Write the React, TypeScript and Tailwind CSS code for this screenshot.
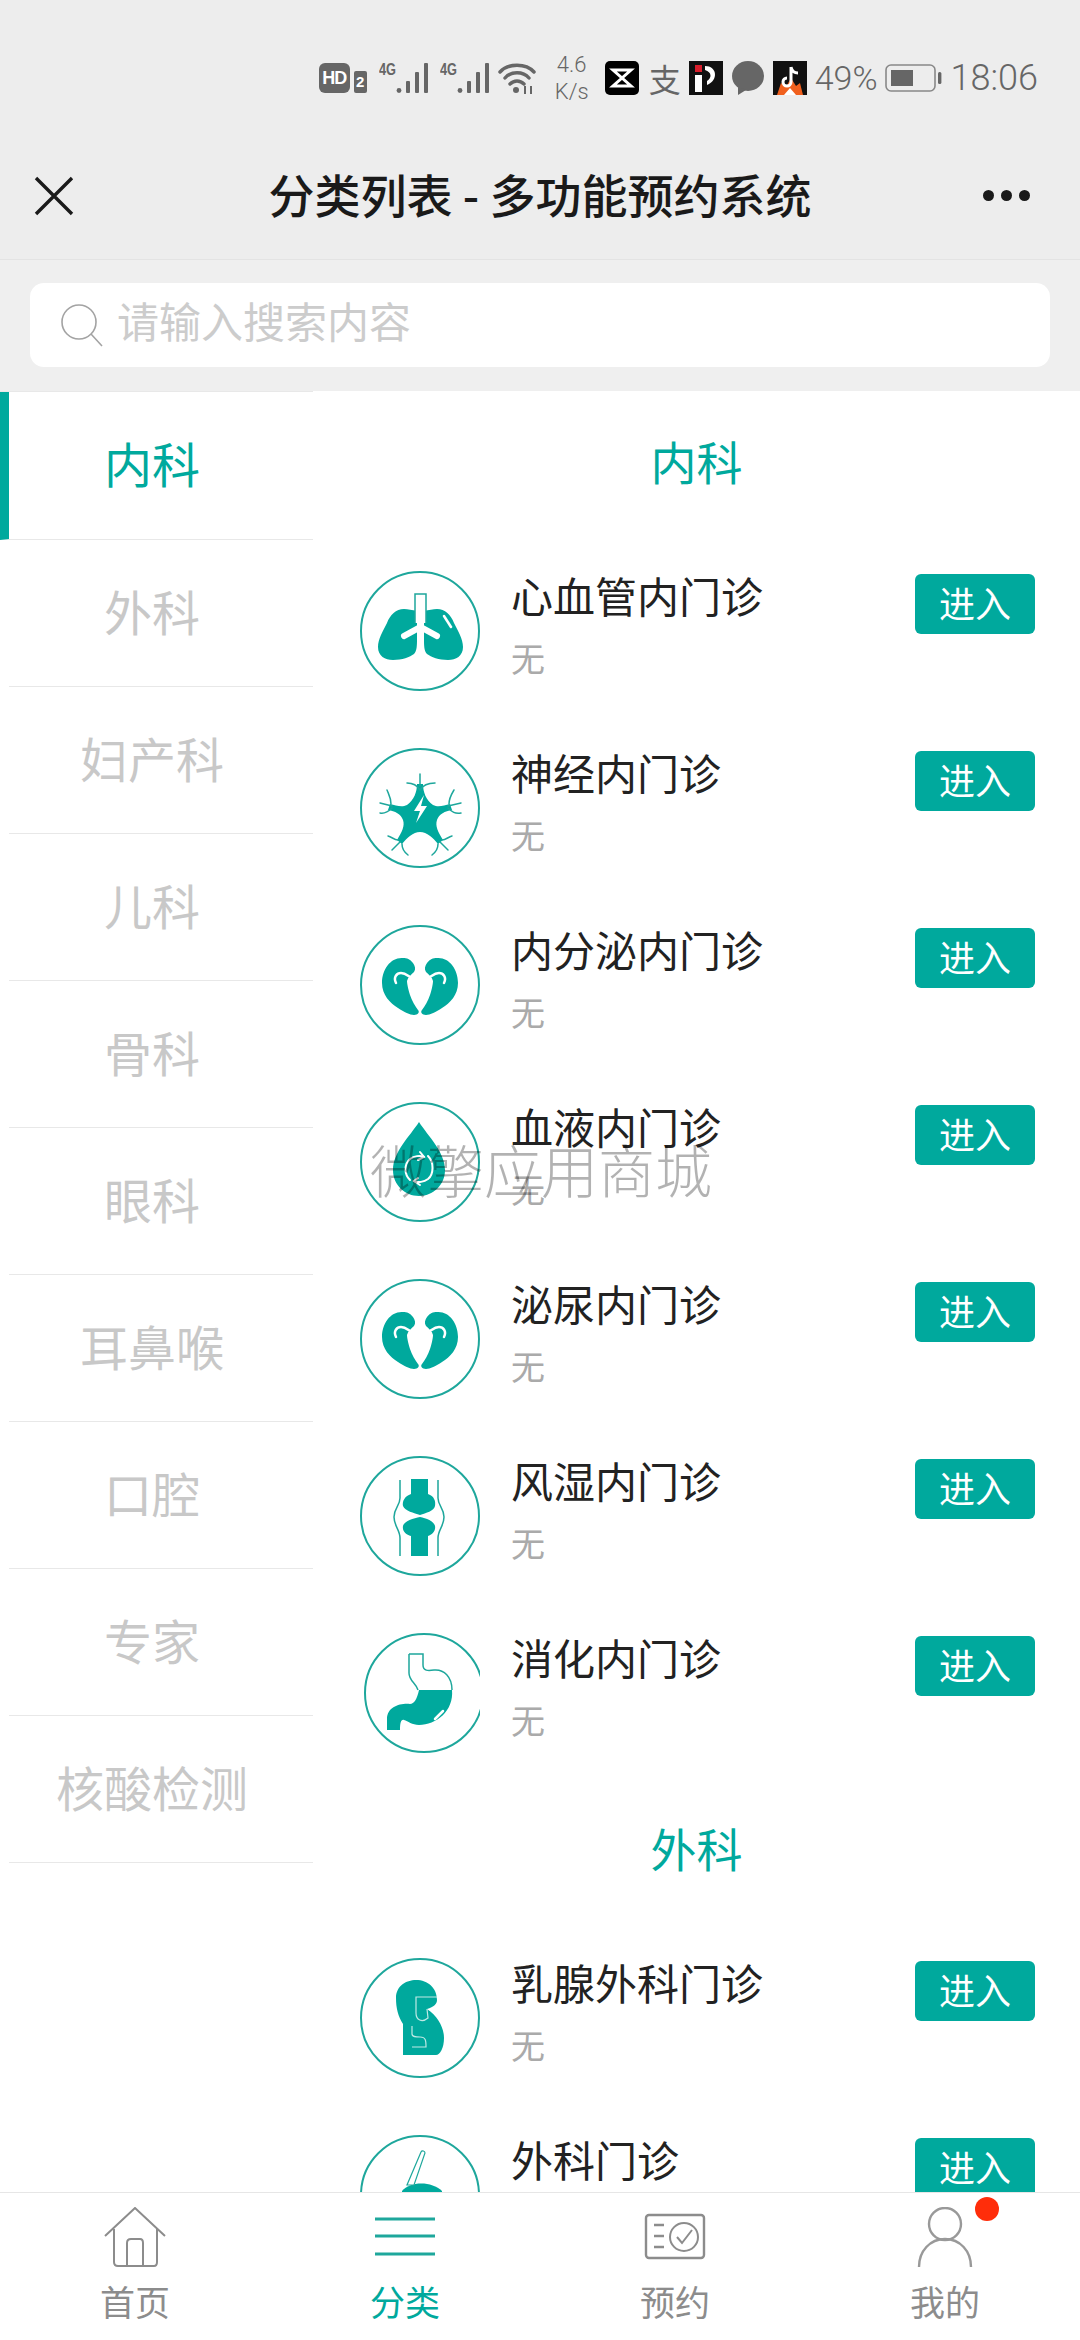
import React from "react";

const TEAL = "#00a99d";
const LINE = "#1ea79c";

function Ring({ cx = 60, children }: { cx?: number; children: React.ReactNode }) {
  return (
    <svg width="120" height="120" viewBox="0 0 120 120" className="shrink-0 overflow-hidden">
      <circle cx={cx} cy="60" r="59" fill="none" stroke={LINE} strokeWidth="2" />
      {children}
    </svg>
  );
}

function Lungs() {
  const lung = "M44 38 C36 38 30 44 27 52 C23 60 18 68 18 76 C18 85 25 89 33 89 C42 89 50 86 54 83 C57 80 57 74 57 68 L57 40 C52 39 48 38 44 38Z";
  return (
    <Ring>
      <path d={lung} fill={TEAL} />
      <path d={lung} fill={TEAL} transform="translate(121 0) scale(-1 1)" />
      <path d="M55 52 V23 H66 V52" fill="#fff" stroke={LINE} strokeWidth="1.5" />
      <path d="M60.5 40 V57 M60.5 56 L44 65 M60.5 56 L77 65" fill="none" stroke="#fff" strokeWidth="6" strokeLinecap="round" />
      <path d="M84 45 L91 56" stroke="#fff" strokeWidth="2.5" strokeLinecap="round" />
    </Ring>
  );
}

function Neuron() {
  return (
    <Ring>
      <path d="M57 36 H63 C63 44 66 52 73 57 C79 60 84 57 90 56 L92 62 C85 63 79 66 77 72 C75 78 78 84 83 92 L78 96 C73 90 67 84 60 84 C53 84 47 90 42 96 L37 92 C42 84 45 78 43 72 C41 66 35 63 28 62 L30 56 C36 57 41 60 47 57 C54 52 57 44 57 36Z" fill={TEAL} />
      <path d="M64 47 L54 63 H60 L56 75 L67 58 H61 Z" fill="#fff" />
      <g fill="none" stroke={LINE} strokeWidth="1.5" strokeLinecap="round">
        <path d="M60 38 V26 M60 42 C57 37 53 35 47 35 M60 42 C63 37 67 35 75 35" />
        <path d="M32 58 L20 55 M32 60 C28 64 25 66 20 65 M31 56 C31 50 29 47 27 42" />
        <path d="M88 58 L101 55 M88 60 C92 64 95 66 101 65 M89 56 C89 50 91 47 94 42" />
        <path d="M40 94 L32 102 M38 92 C34 92 32 89 28 88 M42 96 C42 100 44 104 48 107" />
        <path d="M80 94 L88 102 M82 92 C86 92 88 89 92 88 M78 96 C78 100 76 104 72 107" />
      </g>
    </Ring>
  );
}

function Kidney() {
  const k = "M43 33 C31 32 22 44 22 58 C22 70 30 78 38 83 C44 87 50 90 54 90 C58 90 60 87 58 85 C55 81 52 76 50 70 C48 64 47 58 47 56 C48 52 51 50 54 47 C56 44 55 41 53 38 C50 34 47 33 43 33Z";
  const c = "M36 58 C33 52 37 48 41 48 C45 48 47 50 50 52";
  return (
    <Ring>
      <path d={k} fill={TEAL} />
      <path d={k} fill={TEAL} transform="translate(120 0) scale(-1 1)" />
      <path d={c} fill="none" stroke="#fff" strokeWidth="2.5" strokeLinecap="round" />
      <path d={c} fill="none" stroke="#fff" strokeWidth="2.5" strokeLinecap="round" transform="translate(120 0) scale(-1 1)" />
    </Ring>
  );
}

function Drop() {
  return (
    <Ring>
      <path d="M59 20 C50 34 33 50 33 68 C33 83 45 94 59 94 C73 94 85 83 85 68 C85 50 68 34 59 20Z" fill={TEAL} />
      <g fill="none" stroke="#fff" strokeWidth="2" strokeLinecap="round">
        <path d="M50 78 C44 72 44 62 50 57 C54 54 60 53 64 55" />
        <path d="M68 54 C74 60 74 72 68 77 C64 80 58 81 54 79" />
        <path d="M60 50 L64 55 L58 58 M58 76 L54 79 L60 83" />
      </g>
    </Ring>
  );
}

function Joint() {
  return (
    <Ring>
      <path d="M51 23 H68 V38 C74 40 76 45 75 50 C74 55 66 57 60 59 C54 57 45 55 43 50 C42 45 45 40 51 38Z" fill={TEAL} />
      <path d="M43 70 C44 65 54 62 60 61 C66 62 74 65 75 70 C76 75 72 79 68 80 V100 H51 V80 C46 79 42 75 43 70Z" fill={TEAL} />
      <g fill="none" stroke={LINE} strokeWidth="1.5">
        <path d="M40 24 V42 C40 50 34 52 34 61 C34 70 40 74 40 82 V100" />
        <path d="M78 24 V42 C78 50 84 52 84 61 C84 70 78 74 78 82 V100" />
      </g>
    </Ring>
  );
}

function Stomach() {
  return (
    <div className="relative h-[120px] w-[120px] shrink-0 overflow-hidden">
      <svg width="124" height="120" viewBox="0 0 124 120" className="absolute left-[4px] top-0">
        <circle cx="60" cy="60" r="59" fill="none" stroke={LINE} strokeWidth="2" />
        <path d="M45 21 V40 C45 48 52 50 54 57 M45 21 H59 V32 C59 38 64 38 70 37 C80 36 88 44 88 57" fill="none" stroke={LINE} strokeWidth="1.5" />
        <path d="M23 97 L23 86 C23 74 36 70 46 71 C50 71 53 66 55 57 L88 57 C90 78 72 92 55 92 C48 92 44 88 40 87 C37 86 36 90 36 97 Z" fill={TEAL} />
        <path d="M71 86 L79 78" stroke="#fff" strokeWidth="2.5" strokeLinecap="round" />
      </svg>
    </div>
  );
}

function Breast() {
  return (
    <Ring>
      <path d="M36 40 C36 28 46 22 56 22 C68 22 77 30 77 42 C77 46 74 49 67 51 C78 58 84 70 84 80 C84 90 80 97 76 97 L43 97 L43 66 C38 58 36 50 36 40Z" fill={TEAL} />
      <g fill="none" stroke="#bfe9e5" strokeWidth="1.2">
        <path d="M77 39 H56 V55 C56 62 62 65 68 60 L67 51" />
        <path d="M52 68 V76 C52 79 56 79 60 79 C66 79 66 83 66 89 H52" />
      </g>
    </Ring>
  );
}

function Knife() {
  return (
    <Ring>
      <path d="M42 56 C50 46 72 46 82 56 V70 H42Z" fill={TEAL} />
      <path d="M61 17 C62 15 65 16 65 18 L54 50 L47 50 Z" fill="#fff" stroke={LINE} strokeWidth="1.2" />
    </Ring>
  );
}

const section1: [string, React.ReactNode][] = [
  ["心血管内门诊", <Lungs />],
  ["神经内门诊", <Neuron />],
  ["内分泌内门诊", <Kidney />],
  ["血液内门诊", <Drop />],
  ["泌尿内门诊", <Kidney />],
  ["风湿内门诊", <Joint />],
  ["消化内门诊", <Stomach />],
];
const section2: [string, React.ReactNode][] = [
  ["乳腺外科门诊", <Breast />],
  ["外科门诊", <Knife />],
];
const cats = ["外科", "妇产科", "儿科", "骨科", "眼科", "耳鼻喉", "口腔", "专家", "核酸检测"];

function Row({ title, icon }: { title: string; icon: React.ReactNode }) {
  return (
    <div className="flex h-[177px] shrink-0 pl-[47px] pr-[45px] pt-[32px]">
      {icon}
      <div className="ml-[31px] flex-1 -mt-[4px]">
        <div className="h-[56px] text-[42px] leading-[56px] text-[#222]">{title}</div>
        <div className="mt-[11px] h-[48px] text-[34px] leading-[48px] text-[#aaa]">无</div>
      </div>
      <div className="mt-[3px] flex h-[60px] w-[120px] items-center justify-center rounded-[6px] bg-[#00a99d] pb-[5px] text-[36px] text-white">进入</div>
    </div>
  );
}

function SectionTitle({ children }: { children: React.ReactNode }) {
  return <div className="flex h-[148px] shrink-0 items-center justify-center pb-[9px] text-[46px] text-[#00a99d]">{children}</div>;
}

function Signal() {
  return (
    <svg width="50" height="32" viewBox="0 0 50 32" className="shrink-0">
      <text x="0" y="13" fontSize="16" fontWeight="700" fill="#666" textLength="17" lengthAdjust="spacingAndGlyphs" fontFamily="'Liberation Sans'">4G</text>
      <circle cx="20" cy="28.5" r="2.4" fill="#666" />
      <rect x="27" y="19" width="4" height="12" rx="1" fill="#666" />
      <rect x="36" y="10" width="4" height="21" rx="1" fill="#666" />
      <rect x="45" y="1" width="4" height="30" rx="1" fill="#666" />
    </svg>
  );
}

function StatusBar() {
  return (
    <div className="flex h-[156px] items-center justify-end pr-[42px] text-[#666]">
      <div className="flex h-[30px] w-[31px] items-center justify-center rounded-[6px] bg-[#666] text-[18px] font-bold tracking-[-1px] text-white font-['Liberation_Sans',sans-serif]">HD</div>
      <div className="ml-[4px] mt-[8px] flex h-[22px] w-[13px] items-center justify-center rounded-[2px] bg-[#666] text-[15px] font-bold text-white font-['Liberation_Sans',sans-serif]">2</div>
      <div className="ml-[12px]"><Signal /></div>
      <div className="ml-[11px]"><Signal /></div>
      <svg width="40" height="32" viewBox="0 0 40 32" className="ml-[8px] shrink-0">
        <g fill="none" stroke="#666" strokeWidth="3.4" strokeLinecap="round">
          <path d="M2 10 C10 1 28 1 36 10" />
          <path d="M7 16 C13 9 25 9 31 16" />
          <path d="M12 22 C16 18 22 18 26 22" />
        </g>
        <circle cx="18" cy="28" r="3" fill="#666" />
        <path d="M27 24 V32 M33 24 V32" stroke="#666" strokeWidth="2" />
      </svg>
      <div className="ml-[16px] flex w-[36px] flex-col items-center text-[22px] leading-[27px] font-['Roboto',sans-serif] font-light">
        <span>4.6</span>
        <span>K/s</span>
      </div>
      <svg width="34" height="34" viewBox="0 0 34 34" className="ml-[15px] shrink-0">
        <rect width="34" height="34" rx="5" fill="#000" />
        <path d="M8 9 H26 L8 25 H26 Z" fill="none" stroke="#fff" strokeWidth="3" />
      </svg>
      <span className="ml-[10px] w-[34px] text-[32px] leading-[34px] font-['Noto_Sans_CJK_SC',sans-serif]">支</span>
      <svg width="34" height="34" viewBox="0 0 34 34" className="ml-[6px] shrink-0">
        <rect width="34" height="34" fill="#111" />
        <rect x="6" y="4" width="7" height="7" fill="#d81e2c" />
        <rect x="6" y="14" width="7" height="17" fill="#fff" />
        <path d="M16 5 C28 5 30 19 18 24 L18 20 C23 17 23 11 16 9Z" fill="#fff" />
      </svg>
      <svg width="34" height="36" viewBox="0 0 34 36" className="ml-[8px] shrink-0">
        <ellipse cx="17" cy="16" rx="16" ry="15" fill="#666" />
        <path d="M7 27 L7 35 L15 30Z" fill="#666" />
      </svg>
      <svg width="34" height="34" viewBox="0 0 34 34" className="ml-[8px] shrink-0">
        <rect width="34" height="34" fill="#111" />
        <path d="M4 34 L8 22 L13 26 L18 17 L23 25 L27 22 L30 34Z" fill="#f0601e" />
        <path d="M11 34 L17 27 L23 34Z" fill="#fff" />
        <path d="M18 6 V21 A4 4 0 1 1 14 17 M18 6 C19 10 21 12 25 12" fill="none" stroke="#fff" strokeWidth="3" />
      </svg>
      <span className="ml-[8px] text-[34px] font-light font-['Roboto',sans-serif]">49%</span>
      <svg width="58" height="30" viewBox="0 0 58 30" className="ml-[7px] shrink-0">
        <rect x="1" y="2" width="49" height="26" rx="5" fill="none" stroke="#888" strokeWidth="1.6" />
        <rect x="6" y="7" width="22" height="16" fill="#666" />
        <rect x="53" y="9" width="3.4" height="12" rx="1.5" fill="#666" />
      </svg>
      <span className="ml-[8px] text-[36px] font-light font-['Roboto',sans-serif]">18:06</span>
    </div>
  );
}

function TabItem({ label, active, children }: { label: string; active?: boolean; children: React.ReactNode }) {
  return (
    <div className="flex flex-col items-center pt-[14px]">
      <div className="h-[62px] w-[70px]">{children}</div>
      <div className={`mt-[10px] text-[35px] leading-[44px] ${active ? "text-[#00a99d]" : "text-[#8c8c8c]"}`}>{label}</div>
    </div>
  );
}

export default function App() {
  return (
    <div className="relative flex h-[2340px] w-[1080px] flex-col overflow-hidden bg-white font-['Noto_Sans_CJK_SC','Noto_Sans',sans-serif]">
      <div className="h-[260px] shrink-0 border-b border-[#e3e3e3] bg-[#ededed]">
        <StatusBar />
        <div className="relative flex h-[80px] items-center justify-center pb-[6px]">
          <svg width="40" height="40" viewBox="0 0 40 40" className="absolute left-[34px] top-[20px]">
            <path d="M2 2 L38 38 M38 2 L2 38" stroke="#1a1a1a" strokeWidth="3.4" />
          </svg>
          <span className="text-[46px] font-medium text-[#1a1a1a]">分类列表 - 多功能预约系统</span>
          <div className="absolute right-[50px] top-[34px] flex gap-[7px]">
            <span className="h-[11px] w-[11px] rounded-full bg-[#1a1a1a]" />
            <span className="h-[11px] w-[11px] rounded-full bg-[#1a1a1a]" />
            <span className="h-[11px] w-[11px] rounded-full bg-[#1a1a1a]" />
          </div>
        </div>
      </div>
      <div className="h-[131px] shrink-0 bg-[#efefef] px-[30px] pt-[23px]">
        <div className="flex h-[84px] items-center rounded-[14px] bg-white pl-[29px]">
          <svg width="44" height="44" viewBox="0 0 44 44" className="shrink-0">
            <circle cx="20" cy="19" r="17" fill="none" stroke="#a3a3a3" strokeWidth="1.6" />
            <path d="M32 31 L43 43" stroke="#a3a3a3" strokeWidth="1.6" />
          </svg>
          <span className="ml-[14px] mb-[12px] text-[42px] text-[#ccc]">请输入搜索内容</span>
        </div>
      </div>
      <div className="flex min-h-0 flex-1">
        <div className="w-[313px] shrink-0 border-t border-[#e8e8e8]">
          <div className="flex h-[148px] items-center justify-center border-b border-[#e8e8e8] border-l-[9px] border-l-[#00a99d] pb-[8px] pr-[18px] text-[48px] text-[#00a99d]">
            内科
          </div>
          {cats.map((c) => (
            <div key={c} className="ml-[9px] flex h-[147px] items-center justify-center border-b border-[#e8e8e8] pb-[6px] pr-[18px] text-[48px] text-[#c8c8c8]">
              {c}
            </div>
          ))}
        </div>
        <div className="flex min-w-0 flex-1 flex-col overflow-hidden">
          <SectionTitle>内科</SectionTitle>
          {section1.map(([t, i]) => (
            <Row key={t} title={t} icon={i} />
          ))}
          <SectionTitle>外科</SectionTitle>
          {section2.map(([t, i]) => (
            <Row key={t} title={t} icon={i} />
          ))}
        </div>
      </div>
      <div className="grid h-[148px] shrink-0 grid-cols-4 border-t border-[#e6e6e6] bg-white">
        <TabItem label="首页">
          <svg width="70" height="62" viewBox="0 0 70 62" fill="none" stroke="#8c8c8c" strokeWidth="2">
            <path d="M5 29 L35 1 L65 29" />
            <path d="M14 22 V55 C14 58 16 59 18 59 H54 C56 59 57 58 57 55 V22" />
            <path d="M27 59 V36 C27 33 29 32 31 32 H40 C42 32 43 33 43 36 V59" />
          </svg>
        </TabItem>
        <TabItem label="分类" active>
          <svg width="70" height="62" viewBox="0 0 70 62" fill="none" stroke="#1ea79c" strokeWidth="3.2">
            <path d="M5 12 H65 M5 29 H65 M5 47 H65" />
          </svg>
        </TabItem>
        <TabItem label="预约">
          <svg width="70" height="62" viewBox="0 0 70 62" fill="none" stroke="#8c8c8c" strokeWidth="2.4">
            <rect x="6" y="8" width="58" height="43" rx="3" />
            <circle cx="44" cy="30" r="14" strokeWidth="2" />
            <path d="M37 30 L42 36 L52 23" strokeWidth="2" />
            <path d="M14 18 H24 M14 29 H24 M14 40 H24" />
          </svg>
        </TabItem>
        <TabItem label="我的">
          <svg width="70" height="62" viewBox="0 0 70 62" fill="none" stroke="#999" strokeWidth="2.4">
            <ellipse cx="35" cy="17" rx="16" ry="16" />
            <path d="M9 60 C9 44 20 32 35 32 C50 32 61 44 61 60" />
          </svg>
        </TabItem>
      </div>
      <div className="absolute left-[975px] top-[2197px] h-[24px] w-[24px] rounded-full bg-[#ff2d0a]" />
      <div className="absolute left-[370px] top-[1132px] text-[57px] leading-[72px] text-[#000]/30 font-light">微擎应用商城</div>
    </div>
  );
}
